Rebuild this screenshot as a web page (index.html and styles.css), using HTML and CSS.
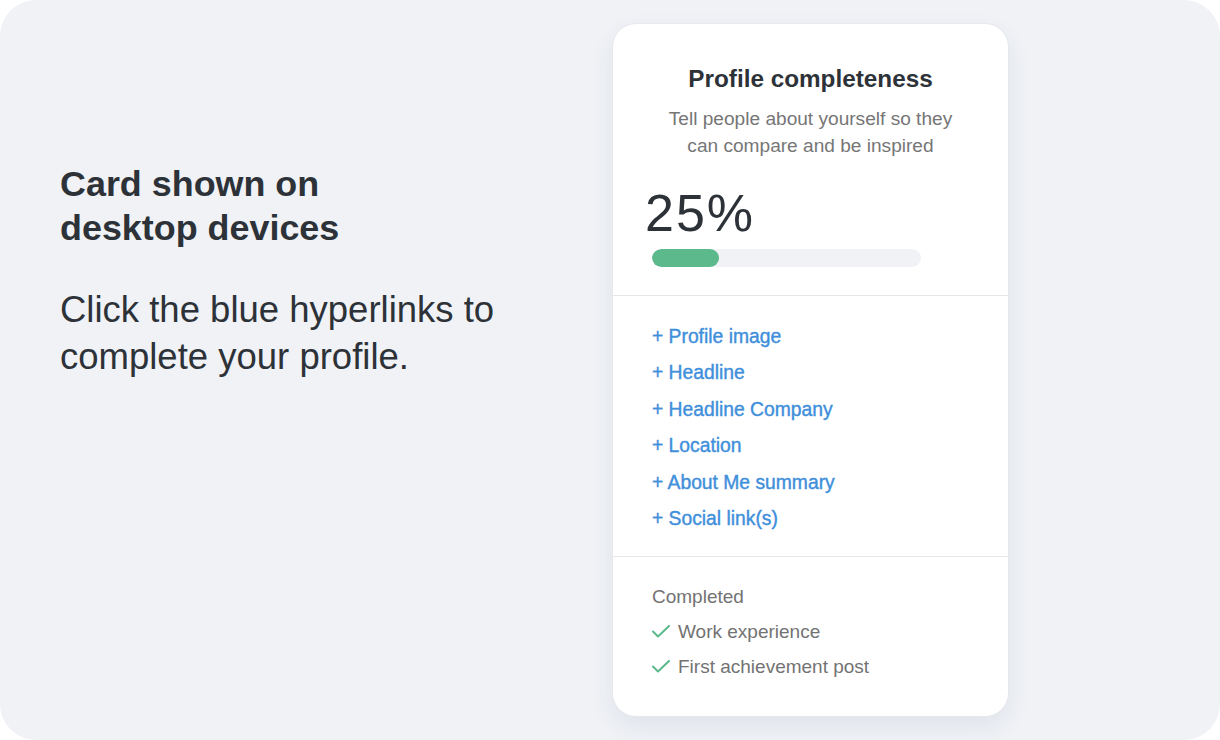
FILE: index.html
```html
<!DOCTYPE html>
<html lang="en">
<head>
<meta charset="utf-8">
<title>Profile completeness</title>
<link rel="stylesheet" href="styles.css">
</head>
<body>
<div class="frame">
  <div class="intro">
    <h1 class="intro-title">Card shown on<br>desktop devices</h1>
    <p class="intro-text">Click the blue hyperlinks to<br>complete your profile.</p>
  </div>
  <div class="card">
    <div class="card-head">
      <h2 class="card-title">Profile completeness</h2>
      <p class="card-sub">Tell people about yourself so they<br>can compare and be inspired</p>
      <div class="percent">25%</div>
      <div class="bar"><div class="bar-fill" style="width:25%"></div></div>
    </div>
    <ul class="todo">
      <li><a href="#">+ Profile image</a></li>
      <li><a href="#">+ Headline</a></li>
      <li><a href="#">+ Headline Company</a></li>
      <li><a href="#">+ Location</a></li>
      <li><a href="#">+ About Me summary</a></li>
      <li><a href="#">+ Social link(s)</a></li>
    </ul>
    <div class="done">
      <div class="done-label">Completed</div>
      <div class="done-item"><svg class="check" viewBox="0 0 18 13" width="18" height="13"><path d="M1 6.5 L6 11.5 L17 1" fill="none" stroke="#5bb98b" stroke-width="2" stroke-linecap="round" stroke-linejoin="round"/></svg>Work experience</div>
      <div class="done-item"><svg class="check" viewBox="0 0 18 13" width="18" height="13"><path d="M1 6.5 L6 11.5 L17 1" fill="none" stroke="#5bb98b" stroke-width="2" stroke-linecap="round" stroke-linejoin="round"/></svg>First achievement post</div>
    </div>
  </div>
</div>
</body>
</html>
```

FILE: styles.css
```css
* { box-sizing: border-box; }
html, body {
  margin: 0;
  padding: 0;
  background: #ffffff;
}
body {
  font-family: "Liberation Sans", Arial, sans-serif;
  color: #2d3238;
}
.frame {
  width: 1220px;
  height: 740px;
  background: #f0f2f6;
  border-radius: 36px;
  display: flex;
  align-items: flex-start;
  overflow: hidden;
}
.intro {
  width: 612px;
  padding: 162px 0 0 60px;
}
.intro-title {
  margin: 0;
  font-size: 35.9px;
  line-height: 44px;
  font-weight: 700;
  color: #2d3238;
}
.intro-text {
  margin: 36px 0 0;
  font-size: 36.5px;
  line-height: 47px;
  font-weight: 400;
  color: #2d3238;
}
.card {
  margin-top: 23px;
  width: 397px;
  background: #ffffff;
  border: 1px solid #e6e8ec;
  border-radius: 24px;
  box-shadow: 0 10px 24px rgba(40, 60, 100, 0.08);
}
.card-head {
  padding: 41px 39px 28px;
  text-align: center;
  border-bottom: 1px solid #e4e6ea;
}
.card-title {
  margin: 0;
  font-size: 24.3px;
  line-height: 28px;
  font-weight: 700;
  color: #2d3238;
}
.card-sub {
  margin: 11.5px 0 0;
  font-size: 19.1px;
  line-height: 27px;
  color: #767676;
}
.percent {
  margin: 26.5px 0 0 -7px;
  text-align: left;
  font-size: 52px;
  line-height: 56px;
  font-weight: 400;
  letter-spacing: 2px;
  color: #2d3238;
}
.bar {
  margin-top: 8px;
  width: 269px;
  height: 18px;
  border-radius: 9px;
  background: #f0f2f6;
  overflow: hidden;
}
.bar-fill {
  height: 100%;
  border-radius: 9px;
  background: #5bb98b;
}
.todo {
  list-style: none;
  margin: 0;
  padding: 22.5px 39px 18.5px;
  border-bottom: 1px solid #e4e6ea;
}
.todo li {
  font-size: 19.3px;
  line-height: 36.5px;
}
.todo a {
  color: #3f8fdb;
  text-decoration: none;
  -webkit-text-stroke: 0.4px #3f8fdb;
}
.done {
  padding: 21.5px 39px 32.5px;
  font-size: 19px;
  line-height: 35px;
  color: #737373;
}
.done-item {
  display: flex;
  align-items: center;
}
.check {
  margin-right: 8px;
  flex: none;
}
```
